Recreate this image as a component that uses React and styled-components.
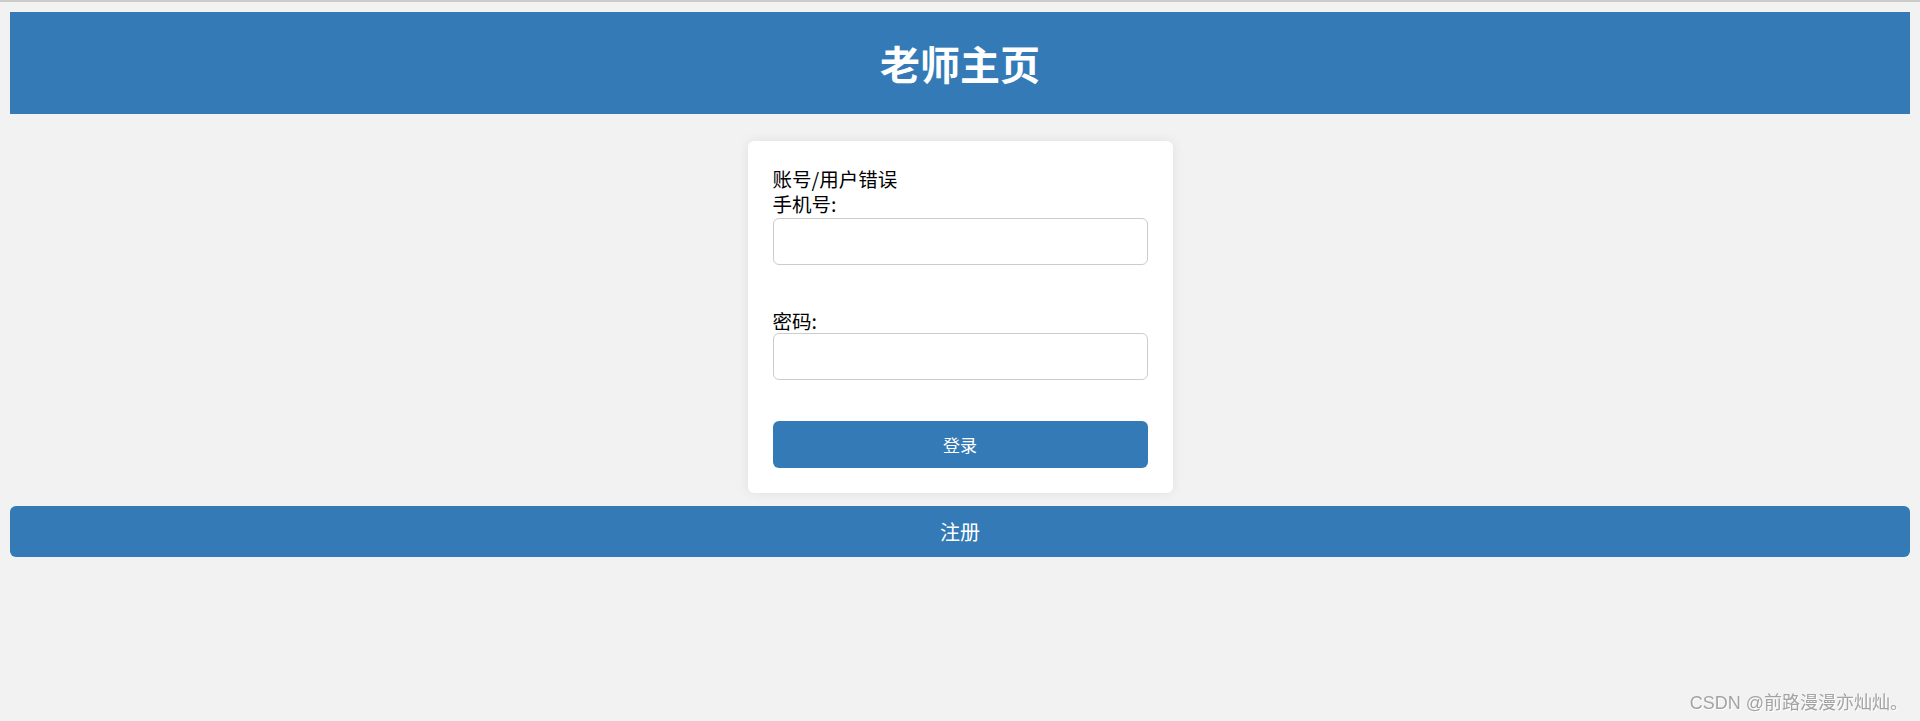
import React from 'react'
import styled, { createGlobalStyle } from 'styled-components'

const GlobalStyle = createGlobalStyle`
    html {
        background : #f2f2f2;
        border-top : 2px solid #cbcbcb;
        min-height : 100%;
    }
    body {
        margin : 10px;
        font-family : "Liberation Sans", "Noto Sans CJK SC", sans-serif;
        color : #000;
    }
`

const Header = styled.header`
    height : 102px;
    background-color : #337ab7;
    display : flex;
    align-items : center;
    justify-content : center;
`

const Title = styled.h1`
    margin : 0;
    color : #ffff;
    font-size : 40px;
    font-weight : 700;
    line-height : 1;
    font-family : "Noto Sans CJK SC", sans-serif;
`

const Card = styled.form`
    box-sizing : border-box;
    width : 425px;
    margin : 27px auto 0;
    padding : 25px;
    background-color : #ffff;
    border-radius : 6px;
    box-shadow : 0px 0px 12px rgba(0, 0, 0, 0.08);
    display : flex;
    flex-direction : column;
`

const Line = styled.div`
    font-size : 19.5px;
    line-height : 25px;
    margin-top : ${props => props.gap || 0}px;
    font-family : "Noto Sans CJK SC", sans-serif;
`

const Input = styled.input`
    box-sizing : border-box;
    width : 100%;
    height : 47px;
    margin-top : ${props => props.gap || 0}px;
    border : 1px solid #cccccc;
    border-radius : 6px;
    padding : 0 12px;
    font-size : 18px;
    outline : none;
    background : #ffff;
`

const Button = styled.button`
    box-sizing : border-box;
    width : 100%;
    height : ${props => props.tall ? 51 : 47}px;
    margin-top : ${props => props.gap || 0}px;
    border : none;
    border-radius : 6px;
    background-color : #337ab7;
    color : #ffff;
    font-size : ${props => props.tall ? 20 : 17}px;
    font-family : "Noto Sans CJK SC", sans-serif;
    cursor : pointer;
`

const Watermark = styled.div`
    position : fixed;
    right : 12px;
    bottom : 7px;
    font-size : 18px;
    color : #a3a3a3;
    text-shadow : 1px 1px 1px #ffffff;
    font-family : "Liberation Sans", "Noto Sans CJK SC", sans-serif;
`

export default function App() {
    return (
        <>
            <GlobalStyle />
            <Header>
                <Title>老师主页</Title>
            </Header>
            <Card onSubmit={e => e.preventDefault()}>
                <Line>账号/用户错误</Line>
                <Line>手机号:</Line>
                <Input gap={2} type="text" />
                <Line gap={43}>密码:</Line>
                <Input type="password" />
                <Button gap={41} type="submit">登录</Button>
            </Card>
            <Button tall gap={13} type="button">注册</Button>
            <Watermark>CSDN @前路漫漫亦灿灿。</Watermark>
        </>
    )
}
